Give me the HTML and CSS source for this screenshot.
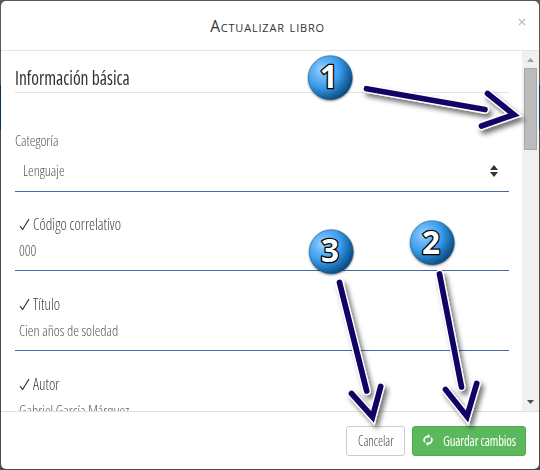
FILE: index.html
```
<!DOCTYPE html>
<html lang="es">
<head>
<meta charset="utf-8">
<title>Actualizar libro</title>
<link rel="stylesheet" href="styles.css">
</head>
<body>
<div class="modal">
  <header class="modal-header">
    <h1 class="modal-title">Actualizar libro</h1>
    <button class="close" aria-label="Cerrar"><svg width="8" height="8" viewBox="0 0 8 8"><path d="M1 1L7 7M7 1L1 7"/></svg></button>
  </header>
  <div class="modal-body">
    <form class="form">
      <h2 class="section-title"><span class="t t-section">Información básica</span></h2>
      <div class="category"><span class="t">Categoría</span></div>
      <div class="select"><span class="t">Lenguaje</span>
        <svg class="sort" width="8" height="12" viewBox="0 0 8 12"><path d="M4 0L8 5H0ZM0 7H8L4 12Z"/></svg>
      </div>
      <div class="field first">
        <div class="label"><svg class="check" width="11" height="13" viewBox="0 0 11 13"><path d="M1 8L3.6 11.5L10 1"/></svg><span class="t t-label">Código correlativo</span></div>
        <div class="value"><span class="t">000</span></div>
      </div>
      <div class="field">
        <div class="label"><svg class="check" width="11" height="13" viewBox="0 0 11 13"><path d="M1 8L3.6 11.5L10 1"/></svg><span class="t t-label">Título</span></div>
        <div class="value"><span class="t">Cien años de soledad</span></div>
      </div>
      <div class="field">
        <div class="label"><svg class="check" width="11" height="13" viewBox="0 0 11 13"><path d="M1 8L3.6 11.5L10 1"/></svg><span class="t t-label">Autor</span></div>
        <div class="value"><span class="t">Gabriel García Márquez</span></div>
      </div>
    </form>
    <div class="scrollbar">
      <svg width="7" height="4" viewBox="0 0 7 4"><path class="up" d="M3.5 0L7 4H0Z"/></svg>
      <div class="thumb"></div>
      <svg class="down" width="7" height="4" viewBox="0 0 7 4"><path d="M0 0H7L3.5 4Z"/></svg>
    </div>
  </div>
  <footer class="modal-footer">
    <button class="btn cancel"><span class="t t-btn">Cancelar</span></button>
    <button class="btn save">
      <svg width="10" height="12" viewBox="0 0 10 12"><path class="arc" d="M1.8 8.4A3.9 3.9 0 0 1 5 2.3M8.2 3.6A3.9 3.9 0 0 1 5 9.7"/><path class="tip" d="M4.6 0L7.4 2.3L4.6 4.6ZM5.4 7.4V12L2.6 9.7Z"/></svg>
      <span class="t t-btn">Guardar cambios</span>
    </button>
  </footer>
</div>
<svg class="annotations" width="540" height="470" viewBox="0 0 540 470">
  <defs>
    <radialGradient id="ball" cx="0.32" cy="0.32" r="0.76">
      <stop offset="0" stop-color="#a9d9ff"/>
      <stop offset="0.22" stop-color="#6bb9fa"/>
      <stop offset="0.52" stop-color="#3a9ceb"/>
      <stop offset="0.8" stop-color="#1768a8"/>
      <stop offset="1" stop-color="#084576"/>
    </radialGradient>
    <filter id="shadow" filterUnits="userSpaceOnUse" x="0" y="0" width="540" height="470"><feDropShadow dx="3" dy="4" stdDeviation="2.8" flood-color="#000" flood-opacity="0.55"/></filter>
    <filter id="soft" filterUnits="userSpaceOnUse" x="0" y="0" width="540" height="470"><feDropShadow dx="0" dy="1" stdDeviation="0.8" flood-color="#000" flood-opacity="0.5"/></filter>
    <path id="a1" d="M366.5 88.7L485 109.5M487.5 93.5L514 114.7L481.5 126"/>
    <path id="a2" d="M439.5 274L461.5 387M445.5 389.5L467 416.5L476.7 383.5"/>
    <path id="a3" d="M339.5 282.5L366.7 391M351.5 393.5L372.5 417L380.7 386.5"/>
  </defs>
  <g filter="url(#shadow)">
    <g class="halo"><use href="#a1"/><use href="#a2"/><use href="#a3"/></g>
  </g>
  <g class="ink"><use href="#a1"/><use href="#a2"/><use href="#a3"/></g>
  <g class="balls" filter="url(#soft)">
    <circle cx="330.3" cy="77.7" r="22"/><circle cx="432.3" cy="242.7" r="22"/><circle cx="331.3" cy="251.7" r="22"/>
  </g>
  <g class="numbers">
    <text x="328.7" y="88.3">1</text><text x="431" y="253.5">2</text><text x="330" y="262.3">3</text>
  </g>
</svg>
</body>
</html>
```
FILE: styles.css
```
* { box-sizing: border-box; }
body {
  margin: 0;
  width: 540px;
  height: 470px;
  padding: 1px;
  overflow: hidden;
  background: linear-gradient(#58575a 0 85px, #0b3350 85px 130px, #4b4a4d 130px);
  font-family: "Open Sans", sans-serif;
  font-stretch: 75%;
  font-weight: 300;
  font-size: 15px;
  color: #555;
}
.modal {
  width: 538px;
  height: 468px;
  display: flex;
  flex-direction: column;
  background: #fff;
  border-radius: 5px;
  overflow: hidden;
}
.modal-header {
  position: relative;
  height: 50px;
  flex: none;
  border-bottom: 1px solid #e5e5e5;
  display: flex;
  justify-content: center;
}
.modal-title {
  margin: 0;
  padding-right: 5px;
  font: 400 15.5px/50px "Open Sans", sans-serif;
  font-variant: small-caps;
  letter-spacing: 0.8px;
  color: #333;
}
.close {
  position: absolute;
  right: 13px;
  top: 17px;
  padding: 0;
  border: 0;
  background: none;
  line-height: 0;
}
.close path { stroke: #c4c4c4; stroke-width: 1.5; }
.modal-body { height: 360px; flex: none; display: flex; overflow: hidden; }
.form { flex: 1; padding: 0 13px 0 14px; }
.t { display: inline-block; white-space: nowrap; transform: scaleX(0.95); transform-origin: 0 50%; }
.t-section { transform: scaleX(0.9); }
.t-label { transform: scaleX(0.94); }
.t-btn { transform: scaleX(0.91); }
.section-title {
  margin: 0;
  height: 42px;
  padding-top: 13px;
  border-bottom: 1px solid #e2e2e2;
  font-size: 19.5px;
  font-weight: 500;
  line-height: 28px;
  color: #333;
}
.category { height: 60px; padding-top: 37px; line-height: 20px; }
.select {
  height: 39px;
  padding: 0 11px 3px 8px;
  display: flex;
  align-items: center;
  justify-content: space-between;
  border-bottom: 1px solid #4c66ae;
}
.select .t { margin-top: -1px; }
.sort { fill: #333; }
.field { height: 80px; padding: 23px 4px 0; border-bottom: 1px solid #4c66ae; }
.field.first { height: 79px; padding-top: 22px; }
.label { display: flex; align-items: center; height: 20px; font-size: 16px; color: #444; }
.check { margin-right: 3px; fill: none; stroke: #333; stroke-width: 1.2; }
.value { margin-top: 6px; line-height: 20px; }
.scrollbar {
  width: 17px;
  background: #f0f0f0;
  display: flex;
  flex-direction: column;
  align-items: center;
  padding: 7px 0;
}
.scrollbar path { fill: #505050; }
.scrollbar .up { fill: #a0a0a0; }
.thumb { width: 13px; height: 82px; margin-top: 6px; background: #bcbcbc; border: 1px solid #a6a6a6; }
.down { margin-top: auto; }
.modal-footer {
  flex: 1;
  border-top: 1px solid #e0e0e0;
  display: flex;
  justify-content: flex-end;
  gap: 7px;
  padding: 14px 13px 0 0;
}
.btn {
  height: 30px;
  padding: 0 11px 2px;
  border: 1px solid #ccc;
  border-radius: 3px;
  background: #fff;
  font: inherit;
  font-size: 14px;
  color: #444;
  display: flex;
  align-items: center;
}
.cancel { width: 59px; }
.save { width: 114px; padding-left: 10px; gap: 10px; background: #5cb85c; border-color: #4cae4c; color: #fff; font-weight: 400; }
.save .t { letter-spacing: -0.2px; }
.save svg { flex: none; }
.arc { fill: none; stroke: #fff; stroke-width: 1.6; }
.tip { fill: #fff; }
.annotations { position: absolute; left: 0; top: 0; }
.halo, .ink { fill: none; stroke-linecap: round; stroke-linejoin: miter; }
.halo { stroke: #fff; stroke-width: 8.4; }
.ink { stroke: #100566; stroke-width: 5.7; }
.balls { fill: url(#ball); stroke: #0e4b7c; stroke-width: 0.5; }
.numbers {
  font: 700 31.5px "Open Sans", sans-serif;
  text-anchor: middle;
  fill: #fff;
  stroke: #000;
  stroke-width: 2.6px;
  stroke-linejoin: round;
  paint-order: stroke;
}
```
